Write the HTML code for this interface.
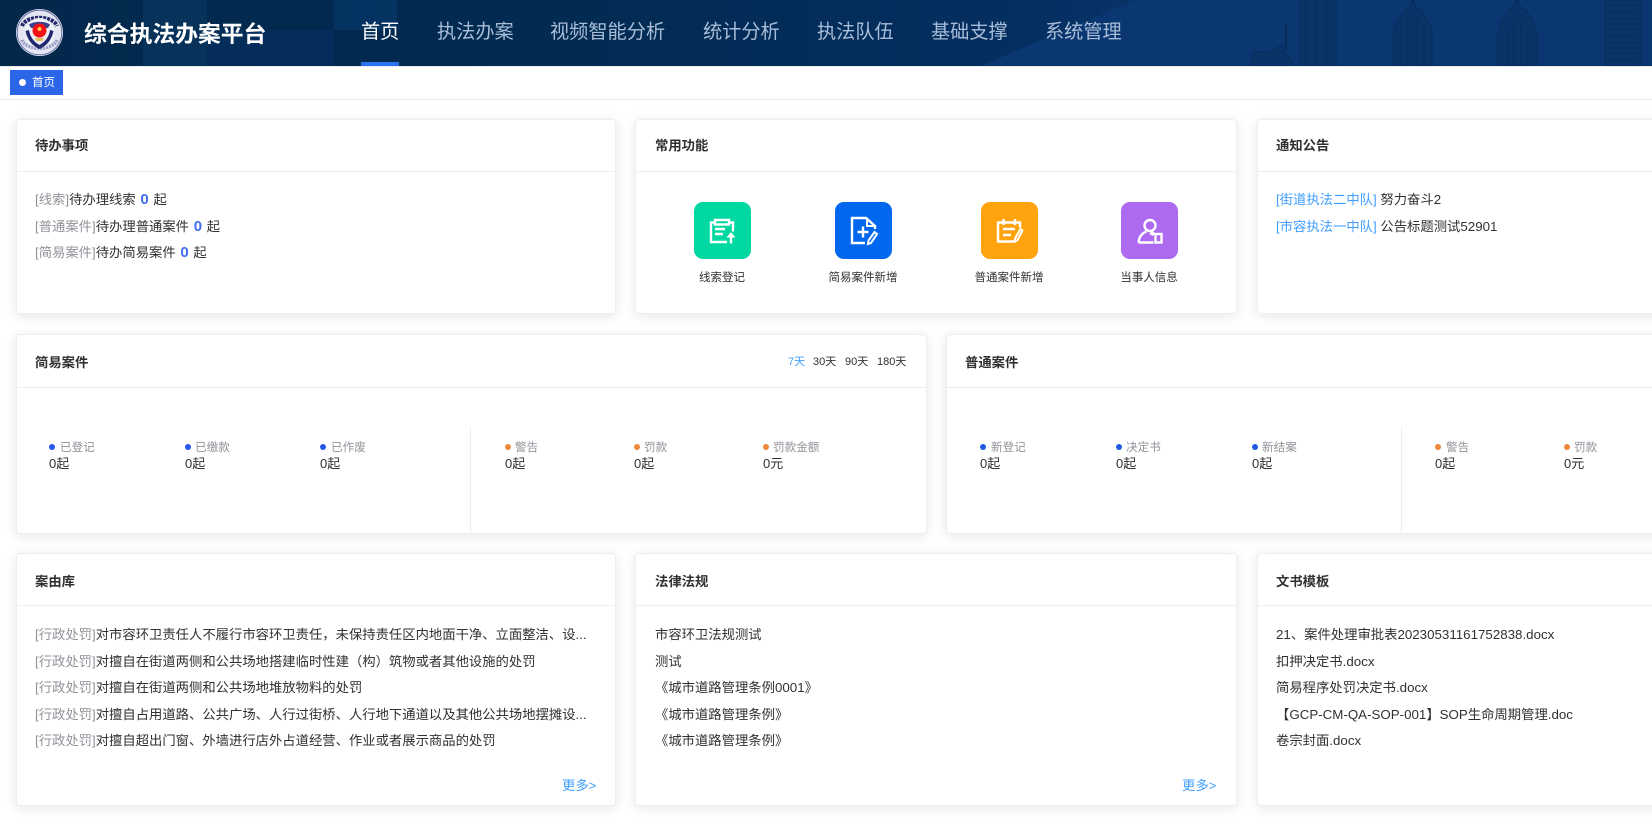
<!DOCTYPE html>
<html lang="zh"><head><meta charset="utf-8"><title>综合执法办案平台</title>
<style>
*{box-sizing:border-box;margin:0;padding:0}
html,body{width:1652px;height:817px;overflow:hidden;background:#fff}
body{font-family:"Liberation Sans","Noto Sans CJK SC",sans-serif;font-size:13.33px;color:#303133;position:relative}
.hd{position:absolute;left:0;top:0;width:1652px;height:66px;overflow:hidden;background:linear-gradient(90deg,#02294c 0%,#022b52 35%,#032e5f 60%,#0a3770 78%,#0a3771 100%)}
.hd svg.bg{position:absolute;left:0;top:0}
.title{position:absolute;left:84px;top:17px;font-size:22.8px;line-height:34px;font-weight:700;color:#fff;white-space:nowrap}
.nav{position:absolute;top:17px;line-height:32px;font-size:19.2px;color:#a9bdd8;white-space:nowrap}
.nav.on{color:#fff}
.bar{position:absolute;left:361px;top:62px;width:38px;height:4px;background:#2a73ee}
.tabs{position:absolute;left:0;top:66px;width:1652px;height:34px;border-top:1px solid #e8e8e8;border-bottom:1px solid #e8e8e8}
.tab{position:absolute;left:10px;top:3px;width:53px;height:25px;background:#2b66e8;color:#fff;font-size:11.5px;line-height:26px;padding-left:22px}
.tab:before{content:"";position:absolute;left:9px;top:9px;width:7px;height:7px;border-radius:50%;background:#fff}
.card{position:absolute;background:#fff;border:1px solid #ebeef5;border-radius:4px;box-shadow:0 2px 12px rgba(0,0,0,.1);overflow:hidden}
.card h3{position:absolute;left:18px;top:18px;font-size:13.33px;line-height:20px;font-weight:700;color:#303133}
.card.r1 h3{top:16px}
.card.c2 h3{left:19px}
.card .ln{position:absolute;left:0;right:0;top:51px;height:1px;background:#ebeef5}
.t{position:absolute;left:18px;line-height:20px;font-size:13.33px;white-space:nowrap;color:#303133}
.g{color:#909399}.b{color:#409eff}
.n{color:#3f6cf0;font-weight:700;font-size:15px;margin:0 1px}
.ql{position:absolute;text-align:center;width:120px;font-size:11.5px;line-height:16px;top:270px;color:#303133}
.qi{position:absolute;top:202px;width:57px;height:57px;border-radius:9px}
.qi svg{display:block}
.d{position:absolute;width:6px;height:6px;border-radius:50%;top:444px}
.lb{position:absolute;font-size:11.6px;line-height:16px;top:440px;color:#909399;white-space:nowrap}
.v{position:absolute;font-size:13px;line-height:18px;top:455px;color:#303133;white-space:nowrap}
.bl{background:#2257e6}.or{background:#f0883c}
.dv{position:absolute;width:1px;top:426px;height:107px;background:#ebeef5}
.more{position:absolute;font-size:13.33px;line-height:18px;top:777px;color:#409eff;white-space:nowrap}
.dy{position:absolute;top:354px;font-size:11px;line-height:16px;white-space:nowrap;color:#303133}
.dy.b{color:#409eff}
</style></head><body>
<div class="hd">
<svg class="bg" width="1652" height="66" viewBox="0 0 1652 66" fill="none">
<rect x="143" y="0" width="64" height="66" fill="#0a3861" opacity=".7"/>
<rect x="207" y="30" width="127" height="36" fill="#052f5f" opacity=".75"/>
<rect x="334" y="0" width="63" height="30" fill="#083a6c" opacity=".6"/>
<path d="M980 66 C1030 45 1090 20 1135 0 H1652 V66Z" fill="#0a3771"/>
<g fill="#0a3367" stroke="#072a57" stroke-width=".7">
<path d="M1285.500 23h1.500v27h-1.500z"/>
<path d="M1250 66l3-15 16 1 9-5 5 0 1 5 8 8 0 6z"/>
<path d="M1300 0h36v66h-36z"/>
<path d="M1393 66V30l5-9 6-9 6-5 3-7 3 7 6 5 6 9 4 9v36z"/>
<path d="M1497 66V36l4-14 7-10 6-6 3-6 3 6 7 6 7 10 4 14v30z"/>
<path d="M1605 0h37v66h-37z"/>
</g>
<g stroke="#072a57" stroke-width=".7" opacity=".75">
<path d="M1608 6h31M1608 12h31M1608 18h31M1608 24h31M1608 30h31M1608 36h31M1608 42h31M1608 48h31M1608 54h31M1608 60h31"/>
<path d="M1401 25v41M1408 18v48M1417 18v48M1424 25v41M1507 30v36M1514 20v46M1521 20v46M1528 30v36"/>
<path d="M1306 0v66M1316 0v66M1326 0v66"/>
</g>
</svg>
<svg style="position:absolute;left:16px;top:9px" width="47" height="47" viewBox="0 0 47 47">
<circle cx="23.500" cy="23.500" r="23.500" fill="#e4e6f1"/>
<circle cx="23.500" cy="23.500" r="22.300" fill="none" stroke="#5a5f9c" stroke-width=".8"/>
<path d="M6 17C10 6 37 6 41 17" fill="none" stroke="#22286c" stroke-width="4" stroke-dasharray="3 1"/>
<path d="M6 31C10 42 37 42 41 31" fill="none" stroke="#9a9dc4" stroke-width="3.500" stroke-dasharray="2 1"/>
<circle cx="23.500" cy="24" r="15" fill="#eef0f8"/>
<path d="M9.500 22C11 30 16 37 23.500 40 31 37 36 30 37.500 22 L34 21C33 28 29 33 23.500 36 18 33 14 28 13 21Z" fill="#23296f"/>
<path d="M13 15.500C18 12 29 12 34 15.500L32 19H15Z" fill="#3a4088"/>
<circle cx="23.500" cy="21.500" r="7" fill="#f50f17"/>
<path d="M19 29h9l-1.500 3h-6z" fill="#dfc25a"/>
<circle cx="23.500" cy="20" r="2" fill="#f7c83e"/>
</svg>
<div class="title">综合执法办案平台</div>
<div class="nav on" style="left:361px">首页</div>
<div class="nav" style="left:437px">执法办案</div>
<div class="nav" style="left:550px">视频智能分析</div>
<div class="nav" style="left:703px">统计分析</div>
<div class="nav" style="left:817px">执法队伍</div>
<div class="nav" style="left:931px">基础支撑</div>
<div class="nav" style="left:1045px">系统管理</div>
<div class="bar"></div>
</div>
<div class="tabs"><div class="tab">首页</div></div>

<div class="card r1" style="left:16px;top:119px;width:600px;height:195px"><h3>待办事项</h3><div class="ln"></div></div>
<div class="card r1 c2" style="left:635px;top:119px;width:602px;height:195px"><h3>常用功能</h3><div class="ln"></div></div>
<div class="card r1" style="left:1257px;top:119px;width:600px;height:195px"><h3>通知公告</h3><div class="ln"></div></div>
<div class="card" style="left:16px;top:334px;width:911px;height:200px"><h3>简易案件</h3><div class="ln" style="top:52px"></div></div>
<div class="card" style="left:946px;top:334px;width:911px;height:200px"><h3>普通案件</h3><div class="ln" style="top:52px"></div></div>
<div class="card" style="left:16px;top:553px;width:600px;height:253px"><h3>案由库</h3><div class="ln"></div></div>
<div class="card c2" style="left:635px;top:553px;width:602px;height:253px"><h3>法律法规</h3><div class="ln"></div></div>
<div class="card" style="left:1257px;top:553px;width:600px;height:253px"><h3>文书模板</h3><div class="ln"></div></div>

<div class="t" style="left:35px;top:190px"><span class="g">[线索]</span>待办理线索 <span class="n">0</span> 起</div>
<div class="t" style="left:35px;top:217px"><span class="g">[普通案件]</span>待办理普通案件 <span class="n">0</span> 起</div>
<div class="t" style="left:35px;top:243px"><span class="g">[简易案件]</span>待办简易案件 <span class="n">0</span> 起</div>

<div class="qi" style="left:694px;background:#00d8a2"><svg width="57" height="57" viewBox="0 0 57 57" fill="none" stroke="#fff" stroke-width="2.400">
<path d="M21 20.500h-4v19.500h16M35 20.500h4v9"/><path d="M21 18h14v4.500h-14z"/><path d="M21 27h10M21 32h8"/><path d="M37 41.500v-9"/><path d="M33.500 35l3.500-4 3.500 4z" fill="#fff" stroke-width="1"/></svg></div>
<div class="qi" style="left:835px;background:#0067ee"><svg width="57" height="57" viewBox="0 0 57 57" fill="none" stroke="#fff" stroke-width="2.400">
<path d="M30 41H17V16h14l9 8v3"/><path d="M32 16v8h8" stroke-width="2"/><path d="M28 24.500v11M22.500 30h11"/><path d="M39.500 30l2.500 2-6 9-3 1 .500-3.500z" stroke-width="2"/></svg></div>
<div class="qi" style="left:981px;background:#ffa30f"><svg width="57" height="57" viewBox="0 0 57 57" fill="none" stroke="#fff" stroke-width="2.400">
<path d="M34 39.500H17V20.500h22v5"/><path d="M22.500 17v6M34 17v6"/><path d="M22 27h12M22 33h8"/><path d="M39.500 27l2 1.500-5 9.500-2.500 1.500 0-3z" stroke-width="2"/></svg></div>
<div class="qi" style="left:1121px;background:#ad6af0"><svg width="57" height="57" viewBox="0 0 57 57" fill="none" stroke="#fff" stroke-width="2.400">
<circle cx="29" cy="23.500" r="5.500"/><path d="M17.500 40.500c.500-6 4-9.500 8-11M32.500 40.500h-15"/><path d="M29 31.500l2.500-2 2 2-2 2z" fill="#fff" stroke-width="1"/><rect x="34.500" y="32" width="6" height="8.500"/></svg></div>
<div class="ql" style="left:662px">线索登记</div>
<div class="ql" style="left:803px">简易案件新增</div>
<div class="ql" style="left:949px">普通案件新增</div>
<div class="ql" style="left:1089px">当事人信息</div>

<div class="t" style="left:1276px;top:190px"><span class="b">[街道执法二中队]</span> 努力奋斗2</div>
<div class="t" style="left:1276px;top:217px"><span class="b">[市容执法一中队]</span> 公告标题测试52901</div>

<div class="dy b" style="left:788px">7天</div><div class="dy" style="left:813px">30天</div><div class="dy" style="left:845px">90天</div><div class="dy" style="left:877px">180天</div>

<div class="d bl" style="left:49px"></div><div class="lb" style="left:60px">已登记</div><div class="v" style="left:49px">0起</div>
<div class="d bl" style="left:185px"></div><div class="lb" style="left:195px">已缴款</div><div class="v" style="left:185px">0起</div>
<div class="d bl" style="left:320px"></div><div class="lb" style="left:331px">已作废</div><div class="v" style="left:320px">0起</div>
<div class="dv" style="left:470px"></div>
<div class="d or" style="left:505px"></div><div class="lb" style="left:515px">警告</div><div class="v" style="left:505px">0起</div>
<div class="d or" style="left:634px"></div><div class="lb" style="left:644px">罚款</div><div class="v" style="left:634px">0起</div>
<div class="d or" style="left:763px"></div><div class="lb" style="left:773px">罚款金额</div><div class="v" style="left:763px">0元</div>

<div class="d bl" style="left:980px"></div><div class="lb" style="left:991px">新登记</div><div class="v" style="left:980px">0起</div>
<div class="d bl" style="left:1116px"></div><div class="lb" style="left:1126px">决定书</div><div class="v" style="left:1116px">0起</div>
<div class="d bl" style="left:1252px"></div><div class="lb" style="left:1262px">新结案</div><div class="v" style="left:1252px">0起</div>
<div class="dv" style="left:1401px"></div>
<div class="d or" style="left:1435px"></div><div class="lb" style="left:1446px">警告</div><div class="v" style="left:1435px">0起</div>
<div class="d or" style="left:1564px"></div><div class="lb" style="left:1574px">罚款</div><div class="v" style="left:1564px">0元</div>

<div class="t" style="left:35px;top:625px"><span class="g">[行政处罚]</span>对市容环卫责任人不履行市容环卫责任，未保持责任区内地面干净、立面整洁、设...</div>
<div class="t" style="left:35px;top:652px"><span class="g">[行政处罚]</span>对擅自在街道两侧和公共场地搭建临时性建（构）筑物或者其他设施的处罚</div>
<div class="t" style="left:35px;top:678px"><span class="g">[行政处罚]</span>对擅自在街道两侧和公共场地堆放物料的处罚</div>
<div class="t" style="left:35px;top:705px"><span class="g">[行政处罚]</span>对擅自占用道路、公共广场、人行过街桥、人行地下通道以及其他公共场地摆摊设...</div>
<div class="t" style="left:35px;top:731px"><span class="g">[行政处罚]</span>对擅自超出门窗、外墙进行店外占道经营、作业或者展示商品的处罚</div>
<div class="more" style="left:562px">更多&gt;</div>

<div class="t" style="left:655px;top:625px">市容环卫法规测试</div>
<div class="t" style="left:655px;top:652px">测试</div>
<div class="t" style="left:655px;top:678px">《城市道路管理条例0001》</div>
<div class="t" style="left:655px;top:705px">《城市道路管理条例》</div>
<div class="t" style="left:655px;top:731px">《城市道路管理条例》</div>
<div class="more" style="left:1182px">更多&gt;</div>

<div class="t" style="left:1276px;top:625px">21、案件处理审批表20230531161752838.docx</div>
<div class="t" style="left:1276px;top:652px">扣押决定书.docx</div>
<div class="t" style="left:1276px;top:678px">简易程序处罚决定书.docx</div>
<div class="t" style="left:1276px;top:705px">【GCP-CM-QA-SOP-001】SOP生命周期管理.doc</div>
<div class="t" style="left:1276px;top:731px">卷宗封面.docx</div>
</body></html>
